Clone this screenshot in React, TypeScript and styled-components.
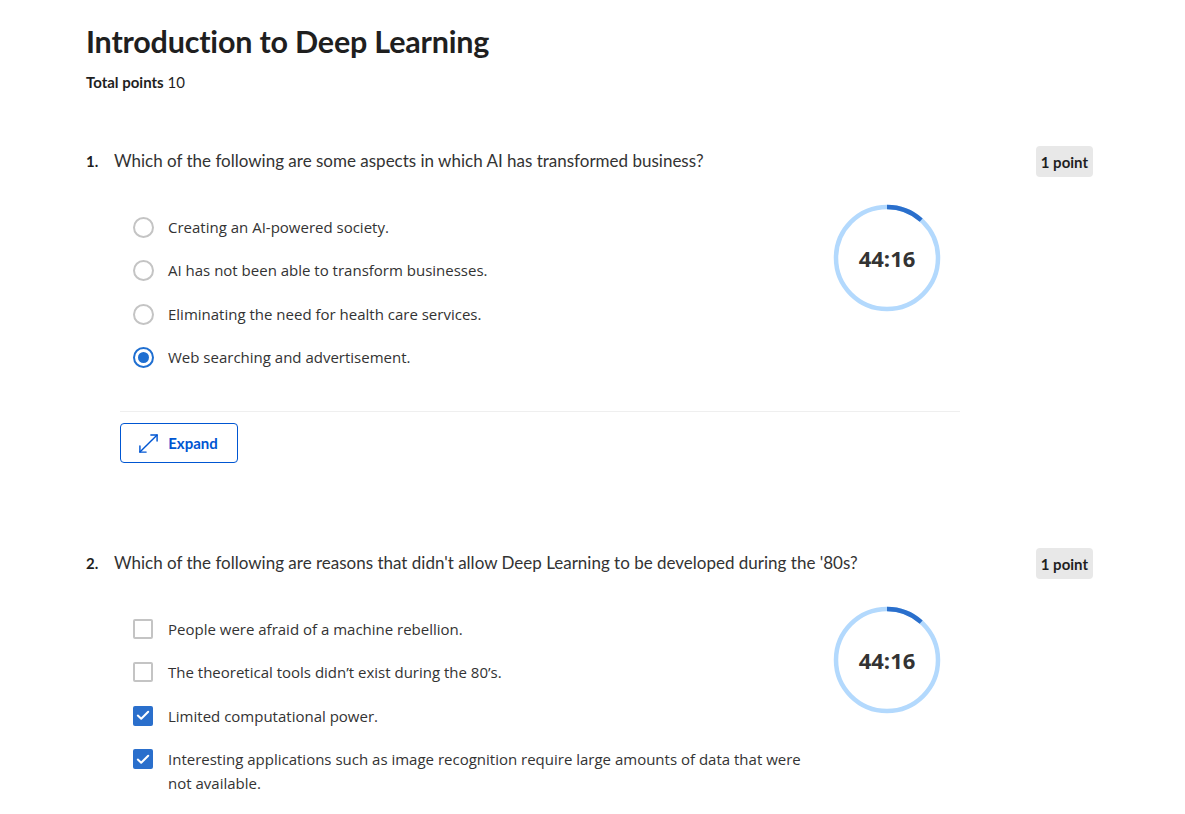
import React from "react";
import styled, { createGlobalStyle } from "styled-components";

const Global = createGlobalStyle`
  html, body { margin: 0; padding: 0; background: #ffffff; }
  body { font-family: "Open Sans", "Noto Sans", sans-serif; color: #1f1f1f; }
  * { box-sizing: border-box; }
`;

const Page = styled.div`
  width: 1185px;
  padding: 21px 92px 0 86px;
`;

const Title = styled.h1`
  margin: 0;
  font-family: "Lato", sans-serif;
  font-weight: 700;
  font-size: 30.5px;
  line-height: 40px;
  color: #1f1f1f;
  letter-spacing: -0.2px;
`;

const Total = styled.div`
  margin-top: 11px;
  font-family: "Lato", sans-serif;
  font-size: 15px;
  line-height: 20px;
  color: #1f1f1f;
  b { font-weight: 700; }
`;

const Question = styled.section<{ $top: number }>`
  margin-top: ${(p) => p.$top}px;
`;

const QHead = styled.div`
  display: flex;
  align-items: flex-start;
  justify-content: space-between;
  height: 32px;
`;

const QText = styled.div`
  display: flex;
  align-items: baseline;
  font-family: "Lato", sans-serif;
  font-size: 17px;
  line-height: 30px;
  color: #333333;
`;

const QNum = styled.span`
  width: 28px;
  font-weight: 700;
  font-size: 15px;
  color: #1f1f1f;
`;

const Badge = styled.span`
  display: inline-flex;
  align-items: center;
  height: 31px;
  padding: 0 5px;
  border-radius: 4px;
  background: #e8e8e8;
  font-family: "Lato", sans-serif;
  font-weight: 700;
  font-size: 15px;
  color: #1f1f1f;
`;

const Body = styled.div`
  margin-left: 34px;
  width: 840px;
  display: flex;
  justify-content: space-between;
  padding-top: 37px;
  padding-bottom: 23px;
`;

const Options = styled.div`
  display: flex;
  flex-direction: column;
  padding-left: 13px;
`;

const Option = styled.label<{ $wide?: number }>`
  display: flex;
  align-items: flex-start;
  min-height: 43.3px;
  font-family: "Open Sans", sans-serif;
  font-size: 15px;
  line-height: 24px;
  color: #333333;
  max-width: ${(p) => p.$wide ?? 680}px;
`;

const Radio = styled.span<{ $on?: boolean }>`
  flex: none;
  width: 21px;
  height: 21px;
  margin-top: 2px;
  margin-right: 14px;
  border-radius: 50%;
  border: 2px solid ${(p) => (p.$on ? "#1f6fd1" : "#c4c4c4")};
  display: flex;
  align-items: center;
  justify-content: center;
  &::after {
    content: "";
    width: 11px;
    height: 11px;
    border-radius: 50%;
    background: ${(p) => (p.$on ? "#1f6fd1" : "transparent")};
  }
`;

const Check = styled.span<{ $on?: boolean }>`
  flex: none;
  width: 20px;
  height: 20px;
  margin-top: 2px;
  margin-right: 15px;
  border-radius: 2px;
  border: ${(p) => (p.$on ? "none" : "2px solid #c4c4c4")};
  background: ${(p) => (p.$on ? "#2a6fcc" : "#fff")};
  display: flex;
  align-items: center;
  justify-content: center;
`;

const TimerWrap = styled.div`
  position: relative;
  width: 108px;
  height: 108px;
  margin-right: 19px;
  margin-top: -11px;
  flex: none;
`;

const TimerText = styled.div`
  position: absolute;
  inset: 0;
  display: flex;
  align-items: center;
  justify-content: center;
  font-family: "Open Sans", sans-serif;
  font-weight: 700;
  font-size: 22px;
  color: #333333;
`;

const Divider = styled.hr`
  margin: 0 0 0 34px;
  width: 840px;
  border: none;
  border-top: 1px solid #efefef;
`;

const ExpandBtn = styled.button`
  margin: 11px 0 0 34px;
  width: 118px;
  height: 40px;
  border: 1px solid #0056d2;
  border-radius: 4px;
  background: #fff;
  color: #0056d2;
  display: flex;
  align-items: center;
  justify-content: center;
  gap: 9px;
  font-family: "Lato", sans-serif;
  font-weight: 700;
  font-size: 15px;
  padding: 0 2px 0 0;
`;

const Timer = () => {
  const r = 51;
  const c = 2 * Math.PI * r;
  const arc = (42 / 360) * c;
  return (
    <TimerWrap>
      <svg width="108" height="108" viewBox="0 0 108 108">
        <circle cx="54" cy="54" r={r} fill="none" stroke="#b3d9fd" strokeWidth="4.5" />
        <circle
          cx="54"
          cy="54"
          r={r}
          fill="none"
          stroke="#2a6fcc"
          strokeWidth="4.5"
          strokeDasharray={`${arc} ${c}`}
          transform="rotate(-90 54 54)"
        />
      </svg>
      <TimerText>44:16</TimerText>
    </TimerWrap>
  );
};

const Tick = () => (
  <svg width="14" height="11" viewBox="0 0 14 11">
    <path d="M1.8 5.6 L5.2 8.8 L12.2 1.8" fill="none" stroke="#fff" strokeWidth="2" strokeLinecap="round" strokeLinejoin="round" />
  </svg>
);

const ExpandIcon = () => (
  <svg width="21" height="21" viewBox="0 0 22 22" fill="none" stroke="#0056d2" strokeWidth="1.5" strokeLinecap="round" strokeLinejoin="round">
    <path d="M2 20 L20 2" />
    <path d="M2 13.5 V20 H8.5" />
    <path d="M13.5 2 H20 V8.5" />
  </svg>
);

export default function App() {
  return (
    <>
      <Global />
      <Page>
        <Title>Introduction to Deep Learning</Title>
        <Total>
          <b>Total points</b> 10
        </Total>

        <Question $top={54}>
          <QHead>
            <QText>
              <QNum>1.</QNum>Which of the following are some aspects in which AI has transformed business?
            </QText>
            <Badge>1 point</Badge>
          </QHead>
          <Body>
            <Options>
              <Option><Radio />Creating an AI-powered society.</Option>
              <Option><Radio />AI has not been able to transform businesses.</Option>
              <Option><Radio />Eliminating the need for health care services.</Option>
              <Option><Radio $on />Web searching and advertisement.</Option>
            </Options>
            <Timer />
          </Body>
          <Divider />
          <ExpandBtn>
            <ExpandIcon />
            Expand
          </ExpandBtn>
        </Question>

        <Question $top={85}>
          <QHead>
            <QText>
              <QNum>2.</QNum>Which of the following are reasons that didn't allow Deep Learning to be developed during the '80s?
            </QText>
            <Badge>1 point</Badge>
          </QHead>
          <Body>
            <Options>
              <Option><Check />People were afraid of a machine rebellion.</Option>
              <Option><Check />The theoretical tools didn’t exist during the 80’s.</Option>
              <Option><Check $on><Tick /></Check>Limited computational power.</Option>
              <Option $wide={670}>
                <Check $on><Tick /></Check>
                Interesting applications such as image recognition require large amounts of data that were not available.
              </Option>
            </Options>
            <Timer />
          </Body>
        </Question>
      </Page>
    </>
  );
}
